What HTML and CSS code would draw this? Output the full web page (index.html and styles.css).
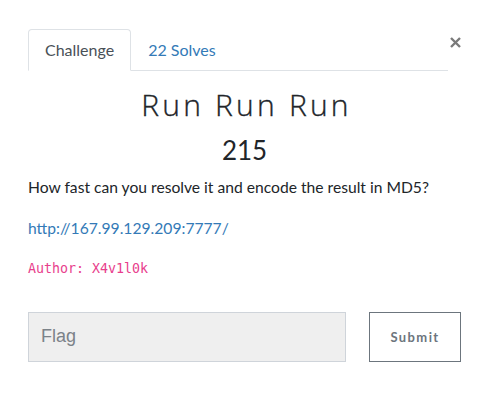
FILE: index.html
```html
<!DOCTYPE html>
<html>
<head>
<meta charset="utf-8">
<link rel="stylesheet" href="styles.css">
</head>
<body>
<div class="modal">
  <div class="header">
    <ul class="tabs">
      <li class="tab active">Challenge</li>
      <li class="tab link">22 Solves</li>
    </ul>
    <span class="close"><svg width="11" height="11" viewBox="0 0 11 11"><path d="M1 1L10 10M10 1L1 10" stroke="#7a7a7a" stroke-width="2.4" stroke-linecap="butt"/></svg></span>
  </div>
  <h3 class="name">Run Run Run</h3>
  <h4 class="value">215</h4>
  <p class="desc">How fast can you resolve it and encode the result in MD5?</p>
  <p class="desc"><a class="url" href="#">http://167.99.129.209:7777/</a></p>
  <p class="author"><code>Author: X4v1l0k</code></p>
  <div class="form">
    <input class="flag" type="text" placeholder="Flag">
    <button class="submit">Submit</button>
  </div>
</div>
</body>
</html>
```
FILE: styles.css
```css
html, body {
  margin: 0;
  padding: 0;
  background: #fff;
}
body {
  font-family: Lato, "Noto Sans", sans-serif;
  font-size: 16px;
  line-height: 1.5;
  color: #212529;
}
.modal {
  padding: 29px 29px 0 28px;
}
.header {
  display: flex;
  align-items: flex-start;
  width: 433px;
}
.tabs {
  list-style: none;
  margin: 0;
  padding: 0;
  display: flex;
  width: 420px;
  border-bottom: 1px solid #dee2e6;
}
.tab {
  padding: 8px 16px;
  border: 1px solid transparent;
  border-top-left-radius: 4px;
  border-top-right-radius: 4px;
  margin-bottom: -1px;
}
.tab.active {
  color: #495057;
  border-color: #dee2e6 #dee2e6 #fff;
  background: #fff;
}
.tab.link {
  color: #337ab7;
}
.close {
  margin-left: auto;
  margin-top: 8px;
  line-height: 0;
}
.name {
  margin: 16px 0 0;
  font-family: "Open Sans", Lato, sans-serif;
  font-size: 30px;
  font-weight: 300;
  letter-spacing: 3.2px;
  text-align: center;
  line-height: 35px;
  color: #212529;
  width: 433px;
  padding-left: 4px;
  box-sizing: border-box;
  -webkit-text-stroke: 0.35px #212529;
}
.value {
  margin: 13px 0 0;
  font-size: 26px;
  font-weight: 400;
  text-align: center;
  line-height: 31px;
  width: 433px;
}
.desc {
  margin: 10px 0 0;
  font-size: 15.65px;
}
.desc + .desc {
  margin-top: 18px;
}
.url {
  color: #337ab7;
  text-decoration: none;
}
.author {
  margin: 14px 0 0;
}
.author code {
  font-family: "DejaVu Sans Mono", "Liberation Mono", monospace;
  font-size: 13.3px;
  color: #e83e8c;
}
.form {
  display: flex;
  margin-top: 33px;
  gap: 23px;
}
.flag {
  box-sizing: border-box;
  width: 318px;
  height: 50px;
  margin: 0;
  padding: 0 12px;
  background: #efefef;
  border: 1px solid #cfd4da;
  border-radius: 0;
  font-family: "Liberation Sans", Arial, sans-serif;
  font-size: 18px;
  color: #495057;
  outline: none;
}
.flag::placeholder {
  color: #7b8289;
}
.submit {
  box-sizing: border-box;
  width: 92px;
  height: 50px;
  margin: 0;
  background: #fff;
  border: 1px solid #6c757d;
  border-radius: 0;
  font-family: Lato, sans-serif;
  font-weight: 700;
  font-size: 13px;
  letter-spacing: 1.4px;
  color: #6c757d;
}
```
